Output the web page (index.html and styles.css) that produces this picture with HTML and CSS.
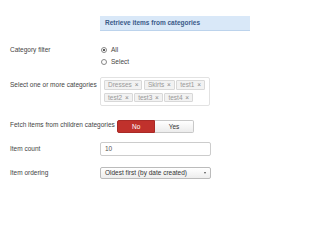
FILE: index.html
```html
<!DOCTYPE html>
<html>
<head>
<meta charset="utf-8">
<link rel="stylesheet" href="styles.css">
</head>
<body>
<div class="form">
  <div class="heading">Retrieve items from categories</div>

  <div class="row row-filter">
    <div class="label">Category filter</div>
    <div class="controls radios">
      <label class="radio"><span class="dot on"></span>All</label>
      <label class="radio"><span class="dot"></span>Select</label>
    </div>
  </div>

  <div class="row row-cats">
    <div class="label">Select one or more categories</div>
    <div class="controls">
      <div class="tagbox">
        <span class="tag">Dresses <i>×</i></span>
        <span class="tag">Skirts <i>×</i></span>
        <span class="tag">test1 <i>×</i></span>
        <span class="tag">test2 <i>×</i></span>
        <span class="tag">test3 <i>×</i></span>
        <span class="tag">test4 <i>×</i></span>
      </div>
    </div>
  </div>

  <div class="row-fetch">
    <div class="label nowrap">Fetch items from children categories</div>
    <div class="toggle">
      <span class="btn no">No</span><span class="btn yes">Yes</span>
    </div>
  </div>

  <div class="row row-count">
    <div class="label">Item count</div>
    <div class="controls">
      <div class="input">10</div>
    </div>
  </div>

  <div class="row row-order">
    <div class="label">Item ordering</div>
    <div class="controls">
      <div class="select">Oldest first (by date created)<span class="caret"></span></div>
    </div>
  </div>
</div>
</body>
</html>
```
FILE: styles.css
```css
html, body {
  margin: 0;
  padding: 0;
  background: #fff;
}
body {
  font-family: "Liberation Sans", Arial, sans-serif;
  font-size: 6.5px;
  color: #444;
}
.form {
  padding: 16px 0 0 10px;
}
.heading {
  box-sizing: border-box;
  margin-left: 90px;
  width: 150px;
  height: 15px;
  line-height: 14px;
  background: #d9e8f8;
  border-bottom: 1px solid #bcd3ec;
  color: #3a5a88;
  font-weight: bold;
  padding-left: 5px;
  white-space: nowrap;
}
.row {
  display: grid;
  grid-template-columns: 90px 111px;
}
.label {
  color: #444;
}
.row-filter {
  margin-top: 13px;
}
.row-filter .label {
  line-height: 12px;
}
.radios {
  display: flex;
  flex-direction: column;
}
.radio {
  display: flex;
  align-items: center;
  height: 12px;
  line-height: 12px;
}
.dot {
  box-sizing: border-box;
  width: 6px;
  height: 6px;
  border: 1px solid #888;
  border-radius: 50%;
  margin: 0 4px 0 1px;
  background: #fff;
  position: relative;
}
.dot.on::after {
  content: "";
  position: absolute;
  left: 1px;
  top: 1px;
  width: 2px;
  height: 2px;
  border-radius: 50%;
  background: #222;
}
.row-cats {
  margin-top: 9px;
}
.row-cats .label {
  padding-top: 4px;
  line-height: 8px;
}
.tagbox {
  box-sizing: border-box;
  width: 110px;
  height: 29px;
  border: 1px solid #e2e2e2;
  border-radius: 2px;
  padding: 2px 0 0 3px;
  display: flex;
  flex-wrap: wrap;
  align-content: flex-start;
  gap: 3px 1.5px;
}
.tag {
  box-sizing: border-box;
  height: 9.5px;
  line-height: 8px;
  padding: 0 3px 0 3px;
  border: 1px solid #d8d8d8;
  background: #f2f2f2;
  color: #999;
  border-radius: 1px;
  white-space: nowrap;
}
.tag i {
  font-style: normal;
  color: #888;
  margin-left: 1px;
}
.row-fetch {
  display: flex;
  align-items: flex-start;
  margin-top: 14px;
}
.nowrap {
  white-space: nowrap;
  padding-top: 1px;
  line-height: 8px;
}
.toggle {
  display: flex;
  margin-left: 2.5px;
}
.btn {
  box-sizing: border-box;
  height: 13px;
  line-height: 11px;
  text-align: center;
  border: 1px solid;
}
.btn.no {
  width: 38px;
  background: #c0312c;
  border-color: #a82a26;
  color: #fff;
  border-radius: 2px 0 0 2px;
}
.btn.yes {
  width: 38.5px;
  background: linear-gradient(#fff, #ececec);
  border-color: #c8c8c8;
  border-left: 0;
  color: #333;
  border-radius: 0 2px 2px 0;
}
.row-count {
  margin-top: 9px;
}
.row-count .label {
  line-height: 14px;
}
.input {
  box-sizing: border-box;
  width: 111px;
  height: 14px;
  line-height: 12px;
  border: 1px solid #ccc;
  border-radius: 2px;
  padding-left: 4px;
  color: #555;
}
.row-order {
  margin-top: 11px;
}
.row-order .label {
  line-height: 11px;
}
.select {
  box-sizing: border-box;
  position: relative;
  width: 111px;
  height: 11.5px;
  line-height: 9.5px;
  border: 1px solid #bbb;
  border-radius: 2px;
  padding-left: 4px;
  background: linear-gradient(#fff, #ededed);
  color: #333;
}
.caret {
  position: absolute;
  right: 4px;
  top: 4px;
  width: 0;
  height: 0;
  border-left: 1.5px solid transparent;
  border-right: 1.5px solid transparent;
  border-top: 2px solid #555;
}
```
